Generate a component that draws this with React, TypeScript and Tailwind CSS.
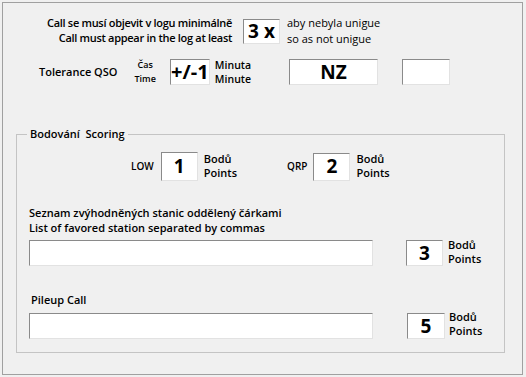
import React from "react";

const font = { fontFamily: '"Open Sans", "Noto Sans", sans-serif' };

function Box({ w, h, children, cls = "" }: { w: string; h: string; children?: React.ReactNode; cls?: string }) {
  return (
    <div
      className={`${w} ${h} ${cls} flex items-center justify-center bg-white border border-t-[#8a8a8a] border-l-[#8a8a8a] border-r-[#e2e2e2] border-b-[#e2e2e2] font-bold text-black leading-none`}
    >
      {children}
    </div>
  );
}

function Points({ cls = "" }: { cls?: string }) {
  return (
    <div className={`flex flex-col text-[11px] font-semibold leading-[14px] text-black ${cls}`}>
      <span>Bodů</span>
      <span>Points</span>
    </div>
  );
}

export default function App() {
  return (
    <div className="w-[526px] h-[377px] bg-[#f0f0f0] pt-[2px] pl-[2px]" style={font}>
      <div className="w-[521px] h-[373px] border border-[#a0a0a0] flex flex-col text-black">
        {/* Row 1 */}
        <div className="flex items-center mt-[16px] h-[25px]">
          <div className="w-[229px] flex flex-col items-end text-[11px] font-semibold leading-[15px] tracking-[-0.3px] mt-[-3px]">
            <span>Call se musí objevit v logu minimálně</span>
            <span>Call must appear in the log at least</span>
          </div>
          <Box w="w-[37px]" h="h-[25px]" cls="ml-[11px] text-[19px]">3 x</Box>
          <div className="ml-[7px] flex flex-col text-[11px] leading-[16px] mt-[-2px]">
            <span>aby nebyla unigue</span>
            <span>so as not unigue</span>
          </div>
        </div>
        {/* Row 2 */}
        <div className="flex items-center mt-[15px] h-[26px]">
          <span className="ml-[36px] text-[11px] font-semibold">Tolerance QSO</span>
          <div className="ml-[17px] flex flex-col items-center text-[9px] font-semibold leading-[14px]">
            <span>Čas</span>
            <span>Time</span>
          </div>
          <Box w="w-[40px]" h="h-[26px]" cls="ml-[14px] text-[20px]">+/-1</Box>
          <div className="ml-[5px] flex flex-col text-[10.5px] font-semibold leading-[14px] mt-[-1px]">
            <span>Minuta</span>
            <span>Minute</span>
          </div>
          <Box w="w-[89px]" h="h-[26px]" cls="ml-[38px] text-[19px]">NZ</Box>
          <Box w="w-[48px]" h="h-[26px]" cls="ml-[24px]" />
        </div>
        {/* Group */}
        <div className="relative ml-[13px] mt-[49px] w-[489px] h-[219px] border border-[#c4c4c4]">
          <span className="absolute left-[10px] top-[-9px] px-[3px] bg-[#f0f0f0] text-[11px] font-semibold leading-[16px]">
            Bodování&nbsp; Scoring
          </span>
          <div className="flex items-center mt-[17px] h-[29px]">
            <span className="ml-[114px] text-[10px] font-semibold">LOW</span>
            <Box w="w-[37px]" h="h-[29px]" cls="ml-[7px] text-[19px]">1</Box>
            <Points cls="ml-[6px] mt-[-1px]" />
            <span className="ml-[50px] text-[10px] font-semibold">QRP</span>
            <Box w="w-[37px]" h="h-[28px]" cls="ml-[6px] text-[19px]">2</Box>
            <Points cls="ml-[6px] mt-[-1px]" />
          </div>
          <div className="flex flex-col ml-[12px] mt-[24px] text-[11px] font-semibold leading-[15px]">
            <span>Seznam zvýhodněných stanic oddělený čárkami</span>
            <span>List of favored station separated by commas</span>
          </div>
          <div className="flex items-center ml-[12px] mt-[5px]">
            <div className="w-[344px] h-[26px] bg-white border border-t-[#8a8a8a] border-l-[#8a8a8a] border-r-[#e2e2e2] border-b-[#e2e2e2]" />
            <Box w="w-[37px]" h="h-[26px]" cls="ml-[33px] text-[19px]">3</Box>
            <Points cls="ml-[5px] mt-[-2px]" />
          </div>
          <div className="ml-[14px] mt-[26px] text-[11px] font-semibold leading-[15px]">Pileup Call</div>
          <div className="flex items-center ml-[12px] mt-[6px]">
            <div className="w-[344px] h-[26px] bg-white border border-t-[#8a8a8a] border-l-[#8a8a8a] border-r-[#e2e2e2] border-b-[#e2e2e2]" />
            <Box w="w-[38px]" h="h-[26px]" cls="ml-[34px] text-[19px]">5</Box>
            <Points cls="ml-[4px] mt-[-4px]" />
          </div>
        </div>
      </div>
    </div>
  );
}
